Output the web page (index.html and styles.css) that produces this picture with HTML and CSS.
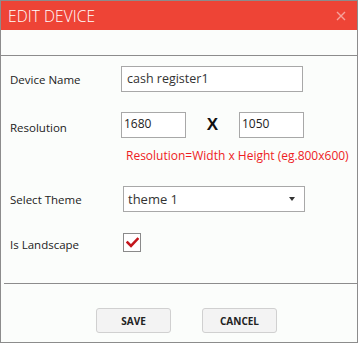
FILE: index.html
```html
<!DOCTYPE html>
<html>
<head>
<meta charset="utf-8">
<link rel="stylesheet" href="styles.css">
</head>
<body>
<div class="dialog">
  <div class="header">
    <span class="title">EDIT DEVICE</span>
    <svg class="close" width="10" height="10" viewBox="0 0 10 10"><path d="M1 1 L9 9 M9 1 L1 9" stroke="#f6a29b" stroke-width="1.4" fill="none"/></svg>
  </div>
  <div class="subbar"></div>
  <div class="body">
    <div class="row row-name">
      <div class="label">Device Name</div>
      <div class="field input-name">cash register1</div>
    </div>
    <div class="row row-res">
      <div class="label">Resolution</div>
      <div class="field input-num">1680</div>
      <div class="times">X</div>
      <div class="field input-num">1050</div>
    </div>
    <div class="hint">Resolution=Width x Height (eg.800x600)</div>
    <div class="row row-theme">
      <div class="label">Select Theme</div>
      <div class="field select">
        <span>theme 1</span>
        <span class="arrow"></span>
      </div>
    </div>
    <div class="row row-land">
      <div class="label">Is Landscape</div>
      <div class="checkbox">
        <svg width="13" height="11" viewBox="0 0 13 11"><path d="M1.5 5.5 L5 9 L11.5 2" fill="none" stroke="#c4161c" stroke-width="2.6" stroke-linecap="square"/></svg>
      </div>
    </div>
  </div>
  <div class="footer">
    <button class="btn btn-save">SAVE</button>
    <button class="btn btn-cancel">CANCEL</button>
  </div>
</div>
</body>
</html>
```
FILE: styles.css
```css
* { box-sizing: border-box; }
html, body { margin: 0; padding: 0; background: #fbfdfb; }
body { font-family: "Open Sans", "Noto Sans", sans-serif; color: #222; }
.dialog {
  width: 358px;
  height: 343px;
  border: 1px solid #8c8c8c;
  background: #fbfdfb;
  display: flex;
  flex-direction: column;
}
.header {
  height: 29px;
  background: #ee4436;
  display: flex;
  align-items: center;
  justify-content: space-between;
  padding: 0 11px 0 7px;
}
.title {
  color: #fff;
  font-size: 15.5px;
  font-weight: 300;
  letter-spacing: 0.1px;
}
.close { display: block; margin-top: 1px; }
.subbar {
  height: 26px;
  border-bottom: 1px solid #8c8c8c;
}
.body {
  height: 227px;
  padding: 10px 0 0 9px;
  font-size: 11.5px;
}
.row { display: flex; align-items: center; }
.label { width: 111px; color: #222; }
.field {
  border: 1px solid #a8a8a8;
  background: #fff;
  height: 26px;
  font-size: 12.5px;
  color: #222;
}
.input-name { width: 182px; padding: 3px 0 0 5px; color: #333; }
.row-res { margin-top: 20px; }
.row-res .label { padding-top: 4px; }
.input-num { width: 65px; padding: 2px 0 0 2px; font-size: 12px; }
.times {
  width: 53px;
  text-align: center;
  font-family: "Liberation Sans", Arial, sans-serif;
  font-weight: bold;
  font-size: 17px;
  color: #111;
}
.hint {
  margin: 9px 0 0 116px;
  color: #ee1c24;
  font-size: 12px;
}
.row-theme { margin-top: 22px; }
.row-theme .label { width: 113px; }
.select {
  width: 182px;
  display: flex;
  align-items: center;
  justify-content: space-between;
  padding: 0 9px 0 4px;
  font-size: 13px;
  color: #333;
}
.arrow {
  width: 0; height: 0;
  border-left: 3.5px solid transparent;
  border-right: 3.5px solid transparent;
  border-top: 4px solid #333;
}
.row-land { margin-top: 21px; }
.row-land .label { width: 113px; padding-top: 4px; }
.checkbox {
  width: 18px;
  height: 19px;
  border: 1px solid #8a8a8a;
  background: #fff;
  display: flex;
  align-items: center;
  justify-content: center;
}
.footer {
  margin-left: 3px;
  border-top: 1px solid #8c8c8c;
  flex: 1;
  display: flex;
  padding: 24px 0 0 92px;
  gap: 31px;
}
.btn {
  width: 75px;
  height: 25px;
  border: 1px solid #d0d0d0;
  border-radius: 3px;
  background: #f3f3f3;
  font-family: "Open Sans", "Noto Sans", sans-serif;
  font-weight: bold;
  font-size: 10px;
  color: #222;
  padding: 0;
}
```
